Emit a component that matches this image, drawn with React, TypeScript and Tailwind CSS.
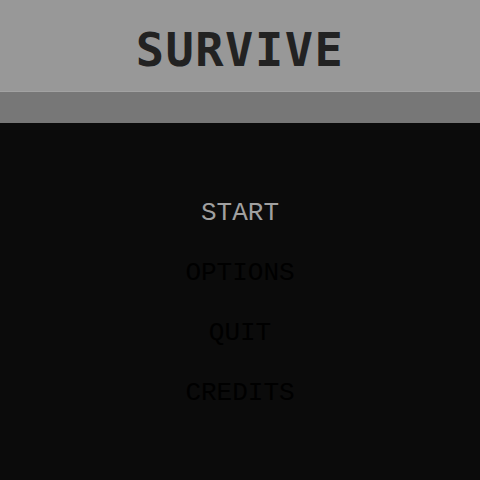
import React from 'react';

const menuItems = [
    { label: 'START', active: true },
    { label: 'OPTIONS', active: false },
    { label: 'QUIT', active: false },
    { label: 'CREDITS', active: false },
];

const App: React.FC = () => {
    return (
        <div className="w-[480px] h-[480px] flex flex-col bg-[#0b0b0b] overflow-hidden">
            <header className="h-[92px] bg-[#989898] border-b border-[#a2a2a2] flex items-center justify-center">
                <h1 className="text-[47px] leading-none font-bold tracking-[1.5px] text-[#222222] pt-[8px] font-['DejaVu_Sans_Mono',monospace]">
                    SURVIVE
                </h1>
            </header>
            <div className="h-[31px] bg-[#777777]" />
            <nav className="flex-1 flex flex-col items-center pt-[75px] gap-[30px]">
                {menuItems.map(item => (
                    <button
                        key={item.label}
                        className={`h-[30px] leading-[30px] text-[26px] font-['Liberation_Mono',monospace] ${item.active ? 'text-[#a0a0a0]' : 'text-black'}`}
                    >
                        {item.label}
                    </button>
                ))}
            </nav>
        </div>
    );
};

export default App;
